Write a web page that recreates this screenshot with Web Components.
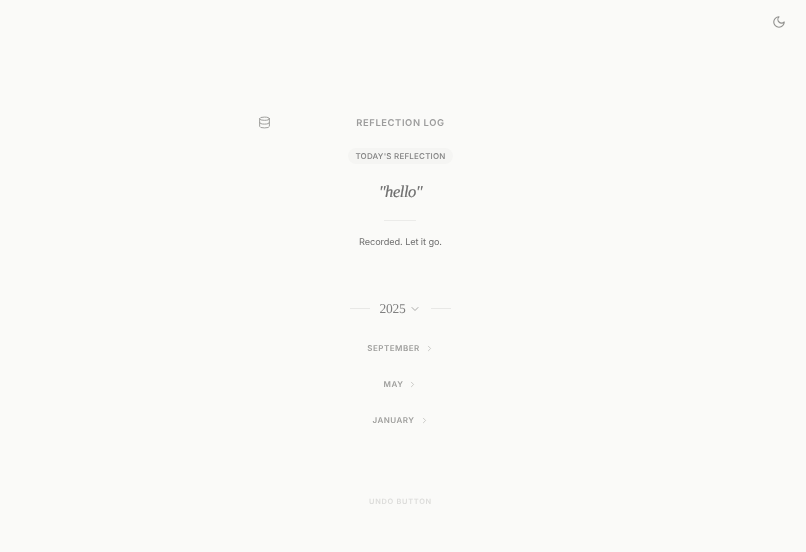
<!DOCTYPE html>
<html>
<head>
<meta charset="utf-8">
<title>Reflection Log</title>
<style>
    html, body{ margin: 0; height: 100%; background: #fafaf8; overflow: hidden; }
    body{ font-family: Inter, "Liberation Sans", sans-serif; color: #888; text-rendering: geometricPrecision; }
</style>
</head>
<body>
<log-app></log-app>

<script>
const chevron = (d, size, color) => `<svg width="${size}" height="${size}" viewBox="0 0 24 24" fill="none" stroke="${color}" stroke-width="2" stroke-linecap="round" stroke-linejoin="round"><path d="${d}"/></svg>`;

class LogHeader extends HTMLElement{
    constructor(){
        super();
        this.$ = this.attachShadow({mode: 'open'});
        this.$.innerHTML = `
            <style>
                :host{
                    display: grid;
                    grid-template-columns: 1fr auto 1fr;
                    align-items: center;
                    width: 284px;
                    height: 14px;
                }
                svg{ display: block; margin: 0 0 2px -1px; }
                h1{
                    margin: 0;
                    font-size: 9.4px;
                    line-height: 14px;
                    font-weight: 600;
                    letter-spacing: 0.6px;
                    color: #9c9c9c;
                    white-space: nowrap;
                }
            </style>
            <svg width="13" height="13" viewBox="0 0 24 24" fill="none" stroke="#9c9c9a" stroke-width="1.8" stroke-linecap="round" stroke-linejoin="round">
                <ellipse cx="12" cy="5" rx="9" ry="3"/>
                <path d="M3 5v14a9 3 0 0 0 18 0V5"/>
                <path d="M3 12a9 3 0 0 0 18 0"/>
            </svg>
            <h1><slot></slot></h1>
            <span></span>
        `;
    }
}
customElements.define('log-header', LogHeader);

class TodayCard extends HTMLElement{
    constructor(){
        super();
        this.$ = this.attachShadow({mode: 'open'});
        this.$.innerHTML = `
            <style>
                :host{
                    display: flex;
                    flex-direction: column;
                    align-items: center;
                }
                .badge{
                    padding: 2px 7px;
                    border-radius: 8px;
                    background: #f5f5f3;
                    font-size: 8px;
                    line-height: 12px;
                    font-weight: 500;
                    letter-spacing: 0.2px;
                    color: #808080;
                    white-space: nowrap;
                }
                .quote{
                    margin-top: 16px;
                    font-family: "Liberation Serif", serif;
                    font-style: italic;
                    font-size: 16.5px;
                    line-height: 24px;
                    letter-spacing: -0.45px;
                    -webkit-text-stroke: 0.2px #6e6e6e;
                    color: #6e6e6e;
                }
                .rule{
                    width: 32px;
                    height: 1px;
                    margin-top: 16px;
                    background: #ebebe9;
                }
                .note{
                    margin-top: 15px;
                    font-size: 9.2px;
                    line-height: 14px;
                    letter-spacing: -0.1px;
                    color: #6e6e6e;
                }
            </style>
            <div class="badge">TODAY'S REFLECTION</div>
            <div class="quote">"hello"</div>
            <div class="rule"></div>
            <div class="note">Recorded. Let it go.</div>
        `;
    }
}
customElements.define('today-card', TodayCard);

class YearHeading extends HTMLElement{
    constructor(){
        super();
        this.$ = this.attachShadow({mode: 'open'});
        this.$.innerHTML = `
            <style>
                :host{
                    display: flex;
                    align-items: center;
                    gap: 10px;
                }
                .line{
                    width: 20px;
                    height: 1px;
                    margin-bottom: 2px;
                    background: #e8e8e6;
                }
                .year{
                    display: flex;
                    align-items: center;
                    gap: 4px;
                    font-family: "Liberation Serif", serif;
                    font-size: 13.5px;
                    line-height: 18px;
                    letter-spacing: -0.3px;
                    color: #808080;
                }
                svg{ display: block; }
            </style>
            <span class="line"></span>
            <span class="year"><slot></slot>${chevron('M6 9l6 6 6-6', 12, '#a8a8a6')}</span>
            <span class="line"></span>
        `;
    }
}
customElements.define('year-heading', YearHeading);

class MonthRow extends HTMLElement{
    constructor(){
        super();
        this.$ = this.attachShadow({mode: 'open'});
        this.$.innerHTML = `
            <style>
                :host{
                    display: flex;
                    align-items: center;
                    justify-content: center;
                    gap: 5px;
                    height: 14px;
                    font-size: 8px;
                    font-weight: 600;
                    letter-spacing: 0.5px;
                    color: #9e9e9c;
                }
                svg{ display: block; }
            </style>
            <slot></slot>${chevron('M9 6l6 6-6 6', 9, '#bcbcba')}
        `;
    }
}
customElements.define('month-row', MonthRow);

class LogApp extends HTMLElement{
    constructor(){
        super();
        this.$ = this.attachShadow({mode: 'open'});
        this.$.innerHTML = `
            <style>
                :host{
                    display: block;
                    position: relative;
                    height: 100%;
                }
                .theme{
                    position: absolute;
                    top: 15px;
                    right: 20px;
                    display: block;
                }
                main{
                    display: flex;
                    flex-direction: column;
                    align-items: center;
                    padding: 116px 5px 0 0;
                    will-change: opacity;
                }
                today-card{ margin-top: 18px; }
                year-heading{ margin-top: 50px; }
                .months{
                    display: flex;
                    flex-direction: column;
                    gap: 22px;
                    margin-top: 23px;
                }
                .undo{
                    margin-top: 69px;
                    font-size: 7.4px;
                    line-height: 12px;
                    font-weight: 600;
                    letter-spacing: 0.7px;
                    color: #dcdcda;
                }
            </style>
            <svg class="theme" width="14" height="14" viewBox="0 0 24 24" fill="none" stroke="#8f8f8d" stroke-width="1.9" stroke-linecap="round" stroke-linejoin="round">
                <path d="M12 3a6 6 0 0 0 9 9 9 9 0 1 1-9-9Z"/>
            </svg>
            <main>
                <log-header>REFLECTION LOG</log-header>
                <today-card></today-card>
                <year-heading>2025</year-heading>
                <div class="months">
                    <month-row>SEPTEMBER</month-row>
                    <month-row>MAY</month-row>
                    <month-row>JANUARY</month-row>
                </div>
                <div class="undo">UNDO BUTTON</div>
            </main>
        `;
    }
}
customElements.define('log-app', LogApp);
</script>
</body>
</html>
